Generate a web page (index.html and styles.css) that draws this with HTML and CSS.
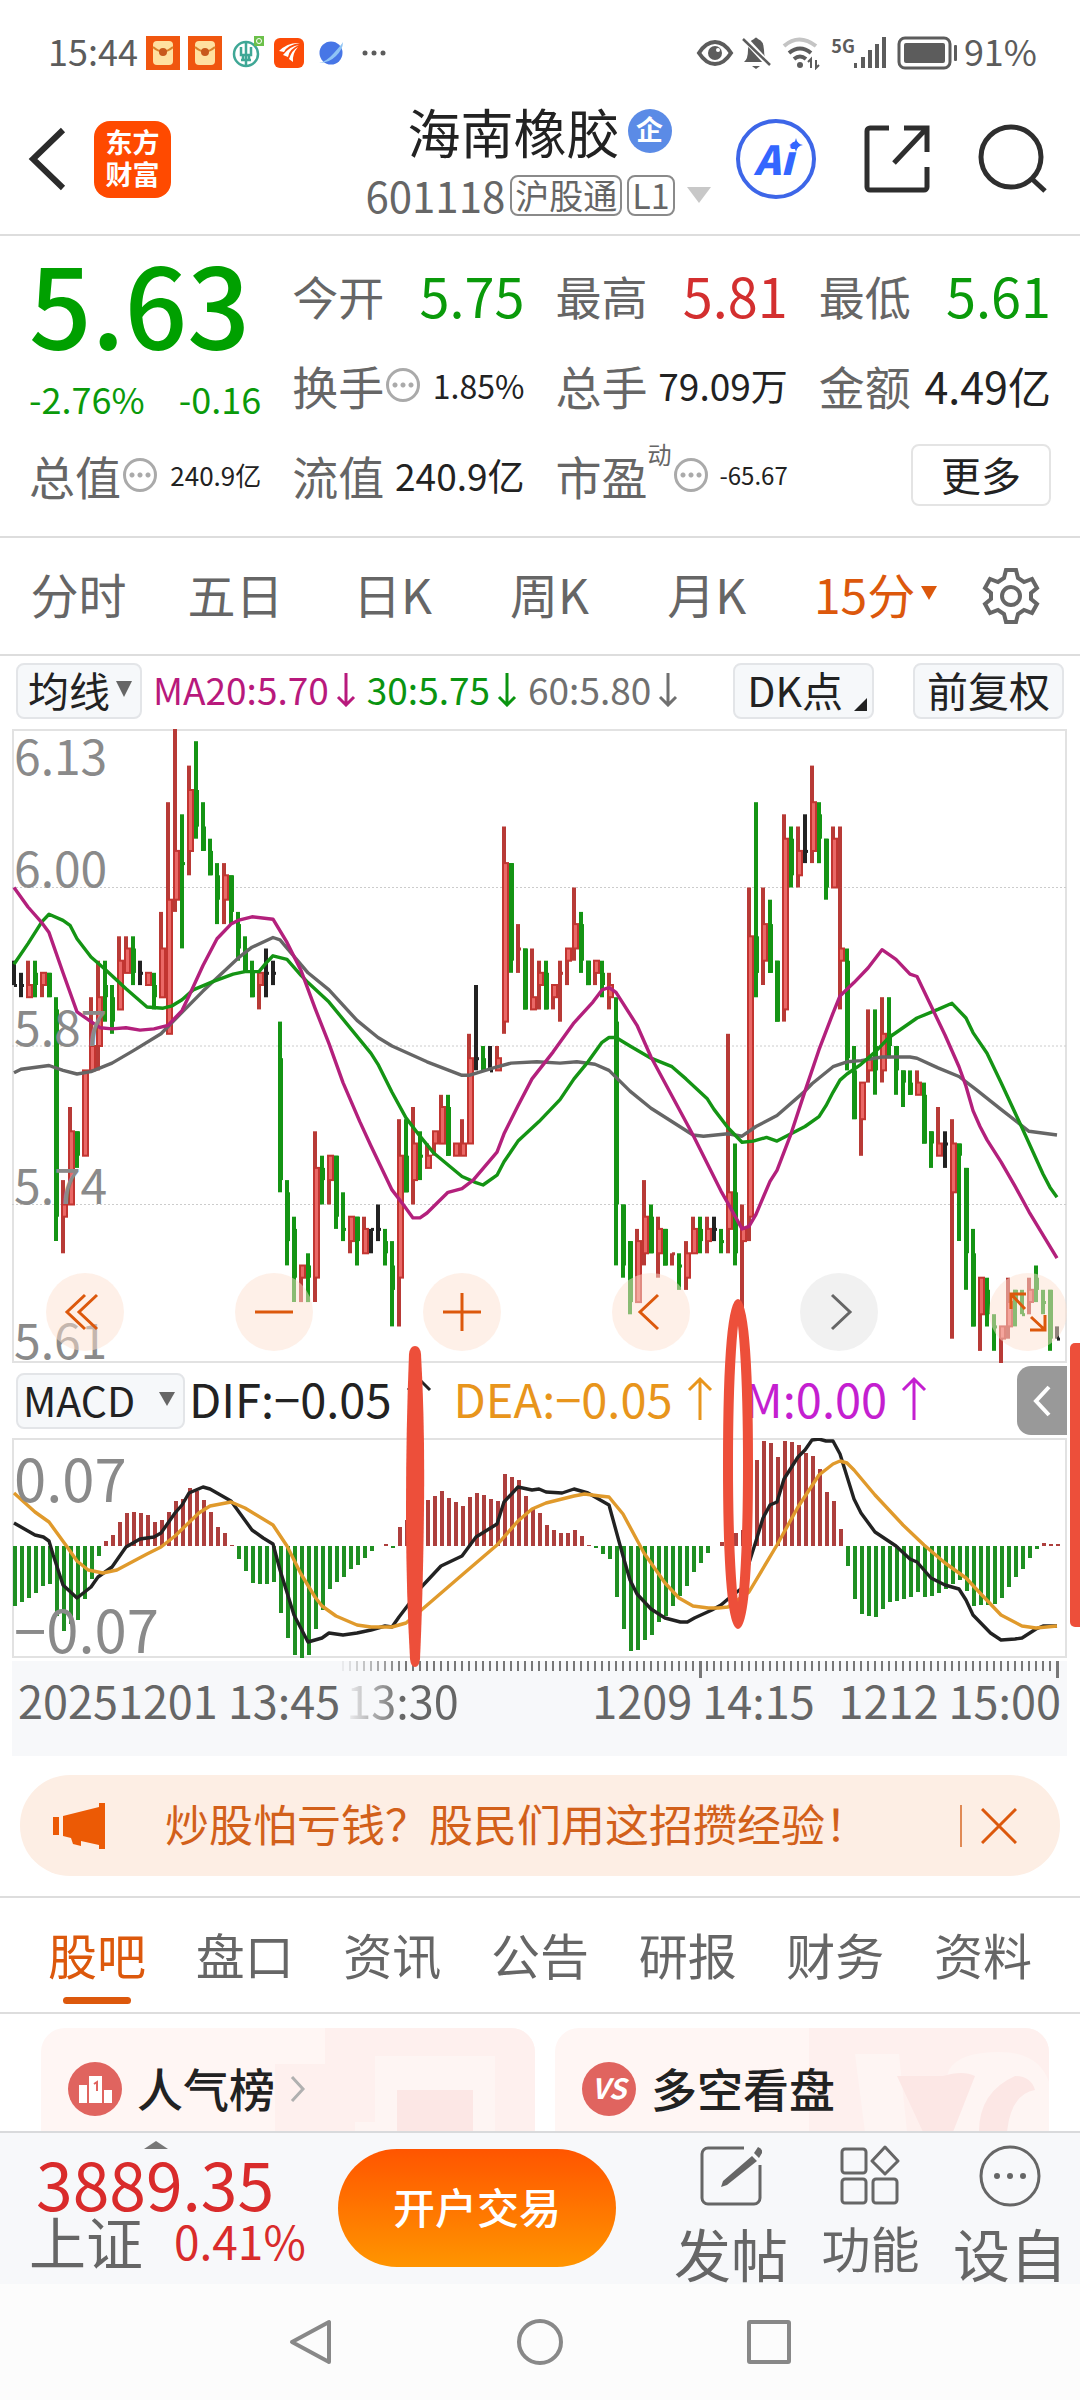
FILE: index.html
```html
<!DOCTYPE html>
<html lang="zh-CN">
<head>
  <meta charset="UTF-8" />
  <meta name="viewport" content="width=device-width, initial-scale=1.0"/>
  <title>海南橡胶 601118</title>
  <link rel="stylesheet" href="styles.css">
</head>
<body>

  <!-- Status bar -->
  <div class="status">
    <span class="clock">15:44</span>
    <svg class="app" viewBox="0 0 34 34"><rect width="34" height="34" fill="#f0560f"/><rect x="7" y="5" width="20" height="24" rx="4" fill="#ffe0a0"/><path d="M7 11q10 9 20 0" fill="none" stroke="#d9822b" stroke-width="2"/><circle cx="17" cy="16" r="4" fill="#c8581c"/></svg>
    <svg class="app" viewBox="0 0 34 34"><rect width="34" height="34" fill="#f0560f"/><rect x="7" y="5" width="20" height="24" rx="4" fill="#ffe0a0"/><path d="M7 11q10 9 20 0" fill="none" stroke="#d9822b" stroke-width="2"/><circle cx="17" cy="16" r="4" fill="#c8581c"/></svg>
    <svg class="app" viewBox="0 0 34 34"><circle cx="16" cy="18" r="12" fill="none" stroke="#3fa796" stroke-width="2.5"/><path d="M16 6v24M11 11v8h10v-8M11 24h10M13 19v5M19 19v5" fill="none" stroke="#3fa796" stroke-width="2.5"/><rect x="24" y="0" width="10" height="10" fill="#6cc04a"/><circle cx="29" cy="5" r="2.5" fill="none" stroke="#fff"/></svg>
    <svg class="app" viewBox="0 0 34 34"><rect x="2" y="2" width="30" height="30" rx="6" fill="#fc4b08"/><path d="M7 15q9-9 21-8q-13 2-16 9zM11 19q7-9 16-10q-10 4-11 12zM17 23q3-9 9-12q-6 7-5 15z" fill="#fff"/></svg>
    <svg class="app" viewBox="0 0 34 34"><circle cx="17" cy="17" r="11.500" fill="#4776e6"/><path d="M5 27Q12 26 20 17T29 6q0 7-7 14T5 27z" fill="#8fc4f5"/></svg>
    <svg class="app" viewBox="0 0 34 34" fill="#5c5c5c"><circle cx="9" cy="17" r="2.500"/><circle cx="18" cy="17" r="2.500"/><circle cx="27" cy="17" r="2.500"/></svg>

    <div class="status-right">
      <svg width="38" height="34" viewBox="0 0 38 34"><path d="M3 17Q10 6 19 6t16 11Q28 28 19 28T3 17z" fill="none" stroke="#5c5c5c" stroke-width="4"/><circle cx="19" cy="17" r="7" fill="#5c5c5c"/><circle cx="22" cy="14" r="2" fill="#fff"/></svg>
      <svg width="34" height="36" viewBox="0 0 34 36"><path d="M5 27q4-3 4-12q0-9 6-11q2-3 4 0q6 2 6 11q0 9 4 12z" fill="#5c5c5c"/><path d="M13 31h8l-4 3z" fill="#5c5c5c"/><path d="M5 3l26 28" stroke="#fff" stroke-width="6"/><path d="M4 4l27 26" stroke="#5c5c5c" stroke-width="2.500"/></svg>
      <svg width="40" height="34" viewBox="0 0 40 34" fill="none" stroke-width="4"><path d="M2 10q15-13 32 0" stroke="#c4c4c4"/><path d="M7 17q11-9 22 0M12 23q6-5 12 0" stroke="#5c5c5c"/><circle cx="18" cy="29" r="3" fill="#5c5c5c"/><path d="M29 32v-9l-3 3M34 24v8l3-3" stroke="#5c5c5c" stroke-width="2"/></svg>
      <span class="net">5G</span>
      <svg width="36" height="34" viewBox="0 0 36 34" fill="#5c5c5c"><rect x="2" y="27" width="3" height="5"/><rect x="9" y="21" width="4" height="11"/><rect x="16" y="14" width="4" height="18"/><rect x="23" y="8" width="4" height="24"/><rect x="30" y="1" width="4" height="31"/></svg>
      <svg width="62" height="34" viewBox="0 0 62 34"><rect x="2" y="2" width="51" height="30" rx="6" fill="none" stroke="#5c5c5c" stroke-width="3"/><rect x="7" y="7" width="41" height="20" rx="2" fill="#5c5c5c"/><rect x="57" y="9" width="3" height="16" rx="1" fill="#5c5c5c"/></svg>
      <span class="clock">91%</span>
    </div>
  </div>

  <!-- Header -->
  <header class="header">
    <div class="header-left">
      <button class="icon-btn" aria-label="返回"><svg width="40" height="66" viewBox="0 0 40 66"><path d="M35 4L5 33l30 29" fill="none" stroke="#2b2b2b" stroke-width="6"/></svg></button>
      <a href="#" class="logo">东方<br>财富</a>
    </div>
    <div class="header-mid">
      <h1>海南橡胶<span class="badge">企</span></h1>
      <div class="code">601118<span class="tag">沪股通</span><span class="tag">L1</span><svg width="24" height="16" viewBox="0 0 24 16"><path d="M0 0h24L12 16z" fill="#c8c8c8"/></svg></div>
    </div>
    <div class="header-right">
      <button class="icon-btn ai" aria-label="AI"><span>Ai</span><svg width="14" height="14" viewBox="0 0 14 14"><path d="M7 0q1 6 7 7q-6 1-7 7q-1-6-7-7q6-1 7-7z" fill="#3366ff"/></svg></button>
      <button class="icon-btn" aria-label="分享"><svg width="66" height="68" viewBox="0 0 66 68" fill="none" stroke="#2e2e2e" stroke-width="5"><path d="M25 3H6a3 3 0 0 0-3 3v56a3 3 0 0 0 3 3h54a3 3 0 0 0 3-3V42M40 3h23v24M62 4L30 38"/></svg></button>
      <button class="icon-btn" aria-label="搜索"><svg width="70" height="70" viewBox="0 0 70 70" fill="none" stroke="#2e2e2e" stroke-width="5"><circle cx="33" cy="33" r="30"/><path d="M53 54l14 13"/></svg></button>
    </div>
  </header>

  <!-- Quote -->
  <section class="quote">
    <div class="price">
      <strong>5.63</strong>
      <div class="change"><span>-2.76%</span><span>-0.16</span></div>
    </div>
    <div class="cell"><span>今开</span><b class="s54 down">5.75</b></div>
    <div class="cell"><span>最高</span><b class="s54 up">5.81</b></div>
    <div class="cell"><span>最低</span><b class="s54 down">5.61</b></div>
    <div class="cell"><span>换手<i class="info"></i></span><b class="s32">1.85%</b></div>
    <div class="cell"><span>总手</span><b class="s37">79.09万</b></div>
    <div class="cell"><span>金额</span><b class="s43">4.49亿</b></div>
    <div class="cell"><span>总值<i class="info"></i></span><b class="s26">240.9亿</b></div>
    <div class="cell"><span>流值</span><b class="s37">240.9亿</b></div>
    <div class="cell"><span>市盈<sup>动</sup><i class="info"></i></span><b class="s24">-65.67</b></div>
    <div class="cell"><button class="more">更多</button></div>
  </section>

  <!-- Period tabs -->
  <nav class="periods">
    <a href="#">分时</a>
    <a href="#">五日</a>
    <a href="#">日K</a>
    <a href="#">周K</a>
    <a href="#">月K</a>
    <a href="#" class="active">15分<svg width="16" height="14" viewBox="0 0 16 14"><path d="M0 0h16L8 14z" fill="#dc580c"/></svg></a>
    <button class="icon-btn" aria-label="设置"><svg width="58" height="58" viewBox="0 0 58 58" fill="none" stroke="#666" stroke-width="4"><path d="M24 3h10l2 8 6 4 8-3 5 9-6 5v6l6 5-5 9-8-3-6 4-2 8H24l-2-8-6-4-8 3-5-9 6-5v-6l-6-5 5-9 8 3 6-4z"/><circle cx="29" cy="29" r="9"/></svg></button>
  </nav>

  <!-- Charts -->
  <section class="charts">
    <div class="ma-bar">
      <button class="chip avg">均线<svg width="16" height="16" viewBox="0 0 16 16"><path d="M0 0h16L8 16z" fill="#666"/></svg></button>
      <span class="ma ma20">MA20:5.70<svg width="20" height="34" viewBox="0 0 20 34"><path d="M10 0v32M2 24l8 8 8-8"/></svg></span>
      <span class="ma ma30">30:5.75<svg width="20" height="34" viewBox="0 0 20 34"><path d="M10 0v32M2 24l8 8 8-8"/></svg></span>
      <span class="ma ma60">60:5.80<svg width="20" height="34" viewBox="0 0 20 34"><path d="M10 0v32M2 24l8 8 8-8"/></svg></span>
      <button class="chip dk">DK点<svg width="13" height="13" viewBox="0 0 13 13"><path d="M13 0v13H0z" fill="#222"/></svg></button>
      <button class="chip">前复权</button>
    </div>

    <div class="kline">
      <svg id="kline" viewBox="0 0 1055 634"></svg>
      <div class="controls">
        <button aria-label="最早"><svg viewBox="0 0 78 78"><path d="M39 22L21 39l18 17M51 22L33 39l18 17"/></svg></button>
        <button aria-label="缩小"><svg viewBox="0 0 78 78"><path d="M20 39h38"/></svg></button>
        <button aria-label="放大"><svg viewBox="0 0 78 78"><path d="M20 39h38M39 20v38"/></svg></button>
        <button aria-label="左移"><svg viewBox="0 0 78 78"><path d="M46 22L28 39l18 17"/></svg></button>
        <button aria-label="右移" class="off"><svg viewBox="0 0 78 78"><path d="M32 22l18 17-18 17"/></svg></button>
        <button aria-label="全屏"><svg viewBox="0 0 78 78"><path d="M36 36L22 21M22 36V21h15M42 44l14 13M41 57h15V42"/></svg></button>
      </div>
    </div>

    <div class="macd-bar">
      <button class="chip">MACD<svg width="16" height="14" viewBox="0 0 16 14"><path d="M0 0h16L8 14z" fill="#666"/></svg></button>
      <span class="val dif">DIF:−0.05<svg width="26" height="44" viewBox="0 0 26 44"><path d="M13 44V3M2 14L13 3l11 11"/></svg></span>
      <span class="val dea">DEA:−0.05<svg width="26" height="44" viewBox="0 0 26 44"><path d="M13 44V3M2 14L13 3l11 11"/></svg></span>
      <span class="val m">M:0.00<svg width="26" height="44" viewBox="0 0 26 44"><path d="M13 44V3M2 14L13 3l11 11"/></svg></span>
      <button class="fold" aria-label="收起"><svg width="20" height="32" viewBox="0 0 20 32"><path d="M17 2L4 16l13 14" fill="none" stroke="#fff" stroke-width="4"/></svg></button>
    </div>

    <svg id="macd" viewBox="0 0 1055 220"></svg>

    <div class="axis">
      <svg id="ticks" viewBox="0 0 1055 20"></svg>
      <div class="dates"><span>20251201 13:45</span><span class="fade">13:30</span><span class="mid">1209 14:15</span><span>1212 15:00</span></div>
    </div>

    <!-- hand-drawn marks over both charts -->
    <svg class="marks" viewBox="0 0 1080 1100">
      <path d="M409 698q1-8 6-8t6 8q4 70 3 155t-4 150q-1 8-5 8t-5-8q-4-70-4-150t3-155z" fill="#ed4f3a"/>
      <ellipse cx="738" cy="808" rx="10" ry="160" fill="none" stroke="#ed4f3a" stroke-width="10"/>
      <rect x="1070" y="687" width="14" height="284" rx="5" fill="#ed4f3a"/>
    </svg>
  </section>

  <!-- Promo -->
  <div class="promo">
    <svg width="52" height="46" viewBox="0 0 52 46" fill="#ec5a05"><path d="M0 14h6v18H0zM10 13L46 4V0h6v46h-6v-4l-18-4v5l-8-2-2-6-8-2z"/></svg>
    <a href="#">炒股怕亏钱？股民们用这招攒经验！</a>
    <button class="icon-btn" aria-label="关闭"><svg width="36" height="36" viewBox="0 0 36 36"><path d="M1 1l34 34M35 1L1 35" stroke="#dc580c" stroke-width="3"/></svg></button>
  </div>

  <!-- Content tabs -->
  <nav class="tabs">
    <a href="#" class="active">股吧</a>
    <a href="#">盘口</a>
    <a href="#">资讯</a>
    <a href="#">公告</a>
    <a href="#">研报</a>
    <a href="#">财务</a>
    <a href="#">资料</a>
  </nav>

  <div class="cards">
    <a href="#" class="card">
      <svg class="deco" viewBox="0 0 260 104"><path d="M50 0h210v104H0V36h50z" fill="#fef0ee"/><path d="M100 28h120v76H80V94h20z" fill="#fef5f3"/><path d="M122 62h76v42h-76z" fill="#fce7e5"/></svg>
      <svg width="54" height="54" viewBox="0 0 54 54"><circle cx="27" cy="27" r="27" fill="#e0645f"/><path d="M11 23h8v18h-8zM21 14h13v27H21zM36 28h8v13h-8z" fill="#fff"/><path d="M26 22l3-2v9" fill="none" stroke="#e0645f" stroke-width="2"/></svg>
      <span>人气榜</span>
      <svg width="16" height="26" viewBox="0 0 16 26"><path d="M2 1l11 12L2 25" fill="none" stroke="#b0b0b0" stroke-width="3"/></svg>
    </a>
    <a href="#" class="card">
      <svg class="deco" viewBox="0 0 260 104"><path d="M20 0h240v104H20z" fill="#fef0ee"/><path d="M66 26h44l8 78H76zM140 104l20-62q10-18 50-18t50 30v50z" fill="#fef5f3"/><path d="M190 104q0-40 36-56q16 0 20 14q-24 4-28 42zM108 48h46q20-6 32 0l-22 56h-30z" fill="#fce7e5"/></svg>
      <span class="vs">VS</span>
      <span>多空看盘</span>
    </a>
  </div>

  <!-- Bottom bar -->
  <footer class="bottom">
    <div class="index">
      <svg width="24" height="8" viewBox="0 0 24 8"><path d="M0 8L12 0l12 8z" fill="#777"/></svg>
      <strong>3889.35</strong>
      <div><span>上证</span><em>0.41%</em></div>
    </div>
    <button class="trade">开户交易</button>
    <div class="acts">
      <button class="act big"><svg width="62" height="62" viewBox="0 0 62 62"><path d="M44 3H8a6 6 0 0 0-6 6v44a6 6 0 0 0 6 6h46a6 6 0 0 0 6-6V20" fill="none" stroke="#666" stroke-width="3"/><path d="M52 11l5 5-30 24-6 2 2-6zM54 8l4-6q5 2 4 6l-3 5z" fill="#666"/></svg>发帖</button>
      <button class="act"><svg width="62" height="62" viewBox="0 0 62 62" fill="none" stroke="#666" stroke-width="3"><rect x="3" y="4" width="24" height="24" rx="3"/><rect x="3" y="34" width="24" height="24" rx="3"/><rect x="34" y="34" width="24" height="24" rx="3"/><path d="M46 2l13 14-13 13-13-13z" stroke-linejoin="round"/></svg>功能</button>
      <button class="act big"><svg width="62" height="62" viewBox="0 0 62 62"><circle cx="31" cy="31" r="29" fill="none" stroke="#666" stroke-width="3"/><g fill="#666"><circle cx="18" cy="31" r="3"/><circle cx="31" cy="31" r="3"/><circle cx="44" cy="31" r="3"/></g></svg>设自</button>
    </div>
  </footer>

  <!-- System navigation -->
  <div class="sysnav">
    <button class="icon-btn" aria-label="后退"><svg width="48" height="48" viewBox="0 0 48 48"><path d="M42 4v40L5 24z"/></svg></button>
    <button class="icon-btn" aria-label="主屏"><svg width="48" height="48" viewBox="0 0 48 48"><circle cx="24" cy="24" r="21"/></svg></button>
    <button class="icon-btn" aria-label="最近"><svg width="48" height="48" viewBox="0 0 48 48"><rect x="4" y="4" width="40" height="40" rx="1"/></svg></button>
  </div>

  <script src="chart.js"></script>
</body>
</html>
```
FILE: styles.css
```css
/* -- Reset & Base -- */
* { box-sizing: border-box; margin: 0; padding: 0; }
body {
  font-family: "Noto Sans CJK SC", "Noto Sans", sans-serif;
  background: #fff;
  color: #222;
  line-height: 1;
  overflow-x: hidden;
}
button {
  font: inherit;
  color: inherit;
  background: none;
  border: none;
  cursor: pointer;
}
a { color: inherit; text-decoration: none; }
svg { display: block; flex: none; }
.icon-btn { display: flex; }
.up { color: #d32f2f; }
.down { color: #0a9a0a; }

/* -- Status bar -- */
.status {
  display: flex;
  align-items: center;
  height: 84px;
  padding: 22px 43px 0 48px;
  color: #5c5c5c;
}
.clock { font-size: 36px; line-height: 40px; padding-bottom: 6px; }
.app { width: 34px; height: 34px; margin-left: 8px; }
.status-right {
  display: flex;
  align-items: center;
  gap: 9px;
  margin-left: auto;
}
.net { font-size: 18px; font-weight: 700; padding-bottom: 16px; margin-right: -12px; }
.status-right .clock { margin-left: -4px; }
.status-right svg:first-child { margin-right: -4px; }

/* -- Header -- */
.header {
  display: grid;
  grid-template-columns: 1fr auto 1fr;
  align-items: center;
  height: 152px;
  padding: 0 32px 0 28px;
  border-bottom: 2px solid #ddd;
}
.header-left { display: flex; align-items: center; gap: 26px; }
.logo {
  width: 77px;
  height: 77px;
  border-radius: 16px;
  background: #ff4a00;
  color: #fff;
  font-size: 27px;
  font-weight: 700;
  line-height: 32px;
  padding-top: 5px;
  text-align: center;
}
.header-mid { display: flex; flex-direction: column; align-items: center; gap: 12px; padding-top: 4px; }
.header-mid h1 {
  display: flex;
  align-items: center;
  padding-left: 3px;
  font-size: 53px;
  font-weight: 400;
  line-height: 56px;
}
.badge {
  width: 44px;
  height: 44px;
  margin-left: 8px;
  border-radius: 50%;
  background: #5b8be6;
  color: #fff;
  font-size: 27px;
  font-weight: 700;
  line-height: 40px;
  text-align: center;
}
.code {
  display: flex;
  align-items: center;
  font-size: 42px;
  line-height: 48px;
  color: #666;
}
.tag {
  height: 41px;
  margin-left: 5px;
  padding: 0 3px;
  border: 2px solid #8a8a8a;
  border-radius: 8px;
  font-size: 34px;
  line-height: 35px;
}
.code svg { margin-left: 12px; }
.header-right { display: flex; align-items: center; justify-content: flex-end; gap: 48px; }
.ai {
  width: 80px;
  height: 80px;
  padding: 15px 0 0 14px;
  border: 4px solid #3d66e8;
  border-radius: 50%;
  color: #3366ff;
  font-size: 40px;
  font-weight: 900;
  font-style: italic;
}
.ai svg { margin-left: -4px; }

/* -- Quote -- */
.quote {
  display: grid;
  grid-template-columns: repeat(4, 1fr);
  grid-auto-rows: 90px;
  column-gap: 31px;
  padding: 14px 29px 16px;
  border-bottom: 2px solid #ddd;
}
.price { grid-row: span 2; color: #00a000; }
.price strong {
  display: block;
  font-size: 110px;
  font-weight: 500;
  line-height: 102px;
}
.change {
  display: flex;
  justify-content: space-between;
  font-size: 36px;
  line-height: 92px;
  color: #0a9a0a;
}
.cell { display: flex; align-items: center; justify-content: space-between; white-space: nowrap; }
.cell span { display: flex; align-items: center; font-size: 46px; color: #666; }
.cell b { font-weight: 400; }
.cell sup { font-size: 24px; align-self: flex-start; margin-top: -10px; }
.s54 { font-size: 54px; }
.s43 { font-size: 43px; }
.s37 { font-size: 37px; }
.s32 { font-size: 32px; }
.s26 { font-size: 26px; }
.s24 { font-size: 24px; }
.info {
  width: 34px;
  height: 34px;
  margin-left: 2px;
  border: 3px solid #aaa;
  border-radius: 50%;
  background: radial-gradient(circle, #aaa 2px, transparent 3px) center / 8px 8px repeat-x;
  background-clip: content-box;
  padding: 0 2px;
}
.more {
  width: 140px;
  height: 62px;
  margin-left: auto;
  padding-bottom: 2px;
  border: 2px solid #e4e4e4;
  border-radius: 8px;
  font-size: 40px;
}

/* -- Period tabs -- */
.periods {
  display: flex;
  align-items: center;
  height: 118px;
  padding-right: 40px;
  border-bottom: 2px solid #ddd;
  font-size: 48px;
  color: #666;
}
.periods a { flex: 0 0 15.1%; text-align: center; padding-bottom: 6px; }
.periods .active {
  flex: 1;
  display: flex;
  align-items: center;
  justify-content: center;
  gap: 6px;
  padding-right: 16px;
  color: #dc580c;
}

/* -- Charts -- */
.charts { position: relative; padding: 0 13px 0 12px; }
.charts > svg, .kline > svg { width: 100%; height: auto; }
.chip {
  display: flex;
  align-items: center;
  height: 56px;
  padding: 0 12px 4px;
  border: 2px solid #e3e5e8;
  border-radius: 8px;
  background: #f6f8fa;
  font-size: 41px;
  line-height: 48px;
}
.ma-bar {
  display: flex;
  align-items: center;
  height: 73px;
  padding: 0 3px 4px 4px;
  font-size: 37px;
}
.chip.avg { padding: 0 8px 4px 10px; gap: 6px; }
.ma { display: flex; align-items: center; gap: 7px; margin-left: 11px; padding-bottom: 2px; }
.ma svg, .val svg { fill: none; stroke: currentColor; stroke-width: 3; }
.ma20 { color: #b8197c; }
.ma30 { color: #0a9410; }
.ma60 { color: #707070; }
.chip.dk { margin: 0 39px 0 auto; padding-right: 5px; gap: 11px; }
.chip.dk svg { align-self: flex-end; margin-bottom: 2px; }
.kline { position: relative; }
.controls {
  position: absolute;
  left: 34px;
  right: 0;
  bottom: 12px;
  display: flex;
  justify-content: space-between;
}
.controls button {
  width: 78px;
  height: 78px;
  border-radius: 50%;
  background: rgba(253, 225, 210, 0.5);
}
.controls svg { fill: none; stroke: #dc580c; stroke-width: 3; }
.controls .off { background: rgba(225, 225, 225, 0.45); }
.controls .off svg { stroke: #666; }
.macd-bar {
  display: flex;
  align-items: center;
  height: 75px;
  padding-left: 4px;
}
.macd-bar .chip { width: 169px; padding: 0 8px 4px 5px; justify-content: space-between; }
.val { display: flex; align-items: center; gap: 14px; padding-bottom: 6px; font-size: 47px; }
.dif { margin-left: 4px; }
.dea { margin-left: 22px; color: #e8951c; }
.m { margin-left: 32px; color: #c41fd0; }
.fold {
  display: flex;
  align-items: center;
  justify-content: center;
  width: 50px;
  height: 69px;
  margin-left: auto;
  border-radius: 14px 0 0 14px;
  background: #999;
}
.axis { height: 95px; margin-top: 3px; background: #f7f8fa; }
.axis svg { width: 100%; height: auto; }
.dates {
  display: flex;
  margin-top: -8px;
  padding: 0 6px;
  font-size: 45px;
  line-height: 54px;
  color: #666;
}
.dates .fade {
  margin-left: 6px;
  background: linear-gradient(90deg, #f2f2f4, #666 50%);
  background-clip: text;
  -webkit-background-clip: text;
  color: transparent;
}
.dates .mid { margin: 0 24px 0 auto; }
.charts .marks {
  position: absolute;
  left: 0;
  top: 0;
  pointer-events: none;
}
.label { fill: #8a8a8a; }

/* -- Promo -- */
.promo {
  display: flex;
  align-items: center;
  height: 101px;
  margin: 19px 20px 20px;
  padding: 0 43px 0 33px;
  border-radius: 50px;
  background: #fdeee4;
  color: #d2601a;
  font-size: 44px;
}
.promo a { margin-left: 60px; padding-bottom: 6px; }
.promo .icon-btn {
  margin-left: auto;
  padding: 3px 0 3px 19px;
  border-left: 2px solid #e08a55;
}

/* -- Content tabs -- */
.tabs {
  display: flex;
  justify-content: space-between;
  height: 118px;
  padding: 0 48px;
  border-top: 2px solid #ddd;
  border-bottom: 2px solid #ddd;
  font-size: 49px;
  line-height: 112px;
  color: #666;
}
.tabs .active { position: relative; color: #dc580c; }
.tabs .active::after {
  content: "";
  position: absolute;
  left: 15px;
  right: 15px;
  bottom: 8px;
  height: 7px;
  border-radius: 4px;
  background: #dc580c;
}

/* -- Cards -- */
.cards {
  display: flex;
  gap: 20px;
  height: 117px;
  padding: 14px 31px 0 41px;
  overflow: hidden;
}
.card {
  position: relative;
  flex: 1;
  display: flex;
  align-items: center;
  gap: 15px;
  height: 122px;
  padding: 0 27px;
  border-radius: 24px 24px 0 0;
  background: #fff6f4;
  font-size: 46px;
  font-weight: 500;
  overflow: hidden;
}
.card > * { position: relative; }
.card > span { margin-top: -4px; }
.card .deco { position: absolute; right: 0; top: 0; width: 260px; }
.card .vs {
  width: 54px;
  height: 54px;
  margin-top: 0;
  border-radius: 50%;
  background: #e0645f;
  color: #fff;
  font-size: 28px;
  font-weight: 700;
  font-style: italic;
  line-height: 50px;
  text-align: center;
}

/* -- Bottom bar -- */
.bottom {
  display: flex;
  height: 153px;
  padding: 0 13px 0 29px;
  border-top: 2px solid #d9dadc;
  background: #f7f8fa;
  overflow: hidden;
}
.index { width: 309px; padding-top: 8px; color: #d92b2b; }
.index svg { margin-left: 115px; }
.index strong {
  display: block;
  padding-left: 7px;
  font-size: 66px;
  font-weight: 400;
  line-height: 66px;
}
.index div { display: flex; align-items: center; gap: 31px; font-size: 57px; line-height: 50px; }
.index span { color: #666; }
.index em { font-size: 46px; font-style: normal; }
.trade {
  width: 278px;
  height: 118px;
  margin-top: 16px;
  padding-bottom: 4px;
  border-radius: 59px;
  background: linear-gradient(#ff5500, #ff9500);
  color: #fff;
  font-size: 42px;
  font-weight: 500;
}
.acts {
  flex: 1;
  display: flex;
  justify-content: space-between;
  padding: 12px 0 0 58px;
}
.act {
  display: flex;
  flex-direction: column;
  align-items: center;
  gap: 15px;
  font-size: 49px;
  line-height: 49px;
  color: #666;
}
.act.big { font-size: 57px; line-height: 61px; }

/* -- System navigation -- */
.sysnav {
  display: flex;
  justify-content: center;
  gap: 181px;
  height: 116px;
  padding-top: 34px;
  background: #fcfcfc;
}
.sysnav svg { fill: none; stroke: #888; stroke-width: 4; stroke-linejoin: round; }
```
FILE: chart.js
```js
// -- Price chart data --
// one bar each: colour, high, body top, body bottom, low, in cents below 6.13
const bars = `
k19,21,21,21 k20,21,21,22 r19,21,22,22 g19,20,21,22 r20,20,21,22 g20,20,22,22 g22,23,40,42 r37,39,40,43 r31,33,39,39 g33,33,35,36
r28,28,35,35 r22,26,28,28 r19,22,26,28 g19,21,22,24 g21,22,24,25 r17,19,23,23 r17,18,20,20 g17,18,20,21 k19,20,20,21 r20,20,21,21
g20,21,22,23 r15,18,22,22 r6,14,25,25 r0,10,14,15 g7,11,11,18 r3,5,10,12 g1,5,8,9 g6,8,10,10 g9,10,12,12 g11,12,14,16
r11,12,14,16 g12,12,15,16 g15,16,18,19 g17,18,20,20 g19,20,22,22 r20,20,21,23 k18,20,20,22 k19,20,20,21 g24,27,37,38 g37,38,42,44
g40,41,45,47 r44,44,45,47 g43,44,45,47 r33,36,45,47 g35,36,37,39 r35,35,37,39 g35,35,40,41 g38,41,41,42 r40,40,42,43 g40,40,42,44
r40,41,43,43 k41,41,41,43 k39,41,41,42 g41,42,43,44 g42,44,46,49 r32,35,45,49 g32,35,38,38 r31,34,37,39 g33,35,35,37 r34,35,36,36
r33,33,34,35 r30,31,34,34 g30,31,35,35 r34,34,35,35 r32,34,35,35 r25,27,34,34 k21,27,27,28 g26,27,28,28 k26,28,28,28 r26,27,28,28
r8,11,24,25 g11,11,19,20 r16,18,18,20 g18,18,23,23 r18,22,23,23 r19,20,21,23 g19,20,23,23 r21,21,22,23 r19,20,20,24 r18,18,19,21
r13,16,18,19 g15,16,19,20 g19,19,21,21 r19,19,20,21 g19,20,21,22 r20,21,22,23 g22,24,39,44 g39,39,44,45 g42,42,47,48 r41,42,47,47
r37,40,43,44 g39,40,43,43 r40,41,43,45 g41,41,44,44 r43,43,43,44 g43,44,44,46 r42,43,45,46 r40,41,43,43 g40,41,42,43 r40,41,42,43
k40,41,41,42 g41,42,42,43 r25,38,41,43 g34,38,43,44 r39,41,42,48 r13,17,40,42 g6,17,20,22 r13,16,19,21 g14,16,20,20 g19,19,24,24
r7,9,23,24 g8,9,12,13 r8,10,12,13 k7,10,10,11 r3,6,10,11 g6,7,9,11 g9,9,13,14 r8,9,13,13 r8,18,19,23 g18,19,27,28
g26,28,32,32 r29,29,32,35 r23,27,28,29 g23,26,28,30 r22,25,28,29 g22,25,26,27 g26,26,28,30 g28,28,29,31 g28,29,30,30 r28,29,30,30
g29,30,34,34 g33,33,34,36 r31,34,35,35 k33,34,34,36 r32,34,38,50 g34,34,35,42 g36,36,43,46 g41,43,49,49 r45,45,48,51 g45,46,48,49
g48,49,49,51 r49,49,50,52 r45,47,49,50 g46,46,47,49 g46,48,48,48 r45,46,47,48 g44,45,46,47 g46,47,47,48 g46,46,50,51 k49,50,50,50`;

// moving averages: bar index, cents below 6.13
const ma20 = "0,13 2,14.6 4,15.9 5,16.7 7,20 9,23.2 11,24 12.3,24.5 14,24.6 16,24.5 18,24.7 20,24.6 22,24.3 24,23.1 25,21.9 27,19.4 29,17.2 31,16 32,15.7 34,15.4 37,15.6 39,17.5 41,19.8 43,22.9 45,25.8 47,29 49.4,32.2 51,34.2 54,37.8 55.6,39 57,40.1 58,40.1 59,39.7 62,38 64,37.7 65.6,37 69,34.7 70,33.2 72,30.9 74,28.7 77,26.5 80,24.1 82.7,22.4 84,21.4 85,21.2 86,21.6 89,24.3 91,26.9 94,30.1 97,33.3 99,35.6 101,37.9 102,38.9 104,41 105,40.8 106,39.8 108,37.1 109,36.2 111,33.2 113,29.7 115,26.3 117,23.3 118,21.9 120,20.8 122,19.6 124,18.1 126,18.9 128,20.1 129,20.3 131,22.7 133,25.1 135,27.7 136,29.3 137,31.3 138,32.6 139,33.7 141,35.5 143,37.5 145,39.6 149,43.4";
const ma30 = "0,19.3 2,17.6 4,15.8 5,15.2 7,15.7 8,16.1 9,17.2 11,18.7 13,19.7 16,21.3 19,22.8 21.3,22.9 22.6,22.7 24,22.2 25.6,21.4 28.5,20.7 31.3,20.1 33,19.9 35,19.9 36,19.2 37,18.6 39,18.9 41,20.2 42,20.8 45,22.4 51,26.6 52,27.5 54,29.8 56,31.9 58,33.4 60,34.8 64,36.7 66,37.2 67,37.4 69,36.6 70,35.5 72,33.8 75,32.2 78,30.4 80,28.7 82,27.3 84,25.7 85,25.3 86,25.3 88,26 91,27 94,27.7 96,28.7 99,30.3 100,31.2 102,32.7 104,33.9 105.6,33.8 107.5,33.5 109,33.8 111,33.2 113,32.6 115,31.8 116,30.9 117,29.8 118,28.8 119,28.3 121,27.5 123,26.5 125,25.3 129,23.7 132,23 134,22.5 136,23.7 137,24.9 139,26.6 141,29 144,32.7 147,36.5 148,37.6 149,38.4";
const ma60 = "0,28.2 1,27.9 5,27.6 7,28 9,28.3 11,28.1 14,27.4 17,26.4 21,25 23.2,23.7 27,21.5 32,18.8 34,17.9 37,17.1 38,17.3 42,20 45,21.4 49,23.9 52,25.3 54,26 59,27.3 64,28.4 65,28.4 68.5,27.8 71,27.4 74.7,27.3 78,27.4 80.4,27.3 83,27.5 85,28 88,29.7 91,31.1 97,33.3 98.5,33.4 102,33.2 104,33.4 106,32.6 109,31.7 113,29.7 114,29.1 117,27.7 119,27.3 121,27.2 124,26.9 128,26.9 129,27 132,27.8 135,28.5 137.5,29.6 141,31.2 145,33 149,33.3";

// -- MACD data --
const hist = [-60,-56,-52,-47,-40,-38,-70,-85,-78,-74,-53,-33,-10,5,11,24,33,34,33,31,24,26,34,45,47,58,55,46,34,19,13,1,-13,-25,-37,-38,-38,-36,-67,-92,-109,-112,-109,-83,-64,-43,-36,-31,-23,-19,-12,-5,0,2,-2,19,26,35,42,46,50,55,48,44,40,49,53,51,47,45,72,69,66,50,38,33,21,16,13,13,16,10,1,-2,-8,-13,-51,-83,-105,-104,-94,-89,-76,-70,-60,-50,-40,-26,-17,-7,0,4,8,13,16,60,86,105,103,89,105,104,101,93,90,77,54,45,17,-20,-53,-68,-70,-71,-63,-56,-55,-53,-51,-46,-51,-50,-47,-43,-38,-34,-45,-60,-59,-59,-58,-52,-41,-31,-23,-12,-3,3,2,2];
const dif = "0,85 3,97 4.2,99 5,103 5.6,117 7,147 9,160 11,149 12,139 14,129 16,109 18,101 20,99 21,95 23,75 24,67 25,55 27,49 28,51 29,55 31,63 34,92 35.6,100 37,106 38,132 40,177 42,204 44,200 45,195 47,197 49,195 51,192 53,188 54,189 55,179 56.2,168 58.2,149 61,128 64,118 66,99 69,86 70,64 72,49 74,52 75,51 76,54 78.3,55 80,51 82,55 85,67 87,118 88,142 89,156 91,171 93,180 95.2,184 96.2,184 97.2,180 99.7,172 101,167 102,161 104,150 105,125 106,103 107,80 108,67 109,64 110,41 112,19 113,12 114,2 115,1 116,3 117,3 118,16 120,61 121,75 123,94 126,108 128,121 129,124 131,140 133,147 135,151 136,162 137,177 139.5,195 141,202 143,201 144,200 146,191 147,188 149,188";
const dea = "0,55 3,74 5,84 7.6,109 9,123 10.6,132 12.7,135 14.7,132 19,116 21,109 23,98 26.4,75 28,68 31,64 33,70 37,87 39,108 41,136 43,159 44,168 46,178 49,187 51,189 54,189 56,185 58.2,172 64,137 69,107 72,83 74,71 76,65 80,58 81.5,56 83.7,58 85,59 87,76 90,115 93,145 95,160 97,168 99.2,170 100.6,170 102,169 105,154 109,107 112,69 115,37 117,26 118,23 119,25 120,32 123,57 127,87 130,107 133,125 136,140 138,155 141,177 144,188 146,190 149,188";

const STEP = 7;
const CENT = 634 / 52;
const px = i => 2 + i * STEP;

function line(data, scale, color) {
  const pts = data.split(" ").map(p => {
    const [i, v] = p.split(",").map(Number);
    return px(i).toFixed(1) + "," + (v * scale).toFixed(1);
  }).join(" ");
  return `<polyline points="${pts}" fill="none" stroke="${color}" stroke-width="3.4" stroke-linejoin="round"/>`;
}

function rect(x, y, w, h, attrs) {
  return `<rect x="${x}" y="${y.toFixed(1)}" width="${w}" height="${h.toFixed(1)}" ${attrs}/>`;
}

function drawKline() {
  const colors = { r: "#b83a36", g: "#149414", k: "#222" };
  let out = '<rect x="1" y="1" width="1053" height="632" fill="none" stroke="#e2e2e2" stroke-width="2"/>';
  [13, 26, 39].forEach(k => {
    out += `<path d="M0 ${k * CENT}H1055" stroke="#ccc" stroke-dasharray="2 2"/>`;
  });
  bars.trim().split(/\s+/).forEach((b, i) => {
    const c = b[0];
    const [hi, top, bot, lo] = b.slice(1).split(",").map(n => n * CENT);
    const x = px(i);
    const fill = `fill="${colors[c]}"`;
    out += rect(x - 2, hi, 4, lo - hi, fill);
    if (top === bot) out += rect(x, top - 1, 3, 3, fill);
    else if (c === "r") out += rect(x - 1, top, 5, bot - top, 'fill="#ea6866" stroke="#c23531" stroke-width="2"');
    else out += rect(x - 2, top, 5, bot - top, fill);
  });
  out += line(ma60, CENT, "#666") + line(ma30, CENT, "#149414") + line(ma20, CENT, "#b3207c");
  [["6.13", 46], ["6.00", 158], ["5.87", 317], ["5.74", 475], ["5.61", 630]].forEach(([t, y]) => {
    out += `<text x="2" y="${y}" font-size="48" class="label">${t}</text>`;
  });
  document.getElementById("kline").innerHTML = out;
}

function drawMacd() {
  let out = '<rect x="1" y="1" width="1053" height="218" fill="none" stroke="#e2e2e2" stroke-width="2"/>';
  hist.forEach((h, i) => {
    if (h > 0) out += rect(px(i) - 1, 108 - h, 4, h, 'fill="#ad3f3d"');
    if (h < 0) out += rect(px(i) - 1, 108, 4, -h, 'fill="#1f8f22"');
  });
  out += line(dif, 1, "#222") + line(dea, 1, "#e09a2c");
  out += '<text x="2" y="64" font-size="58" class="label">0.07</text>';
  out += '<text x="2" y="215" font-size="58" class="label">−0.07</text>';
  document.getElementById("macd").innerHTML = out;
}

function drawTicks() {
  let out = "";
  for (let i = 47; i < 150; i++) {
    const big = i === 98 || i === 149;
    out += rect(px(i) - 1, 0, big ? 3 : 2, big ? 17 : 10, `fill="#777" opacity="${Math.min(1, (i - 46) / 10)}"`);
  }
  document.getElementById("ticks").innerHTML = out;
}

drawKline();
drawMacd();
drawTicks();
```
